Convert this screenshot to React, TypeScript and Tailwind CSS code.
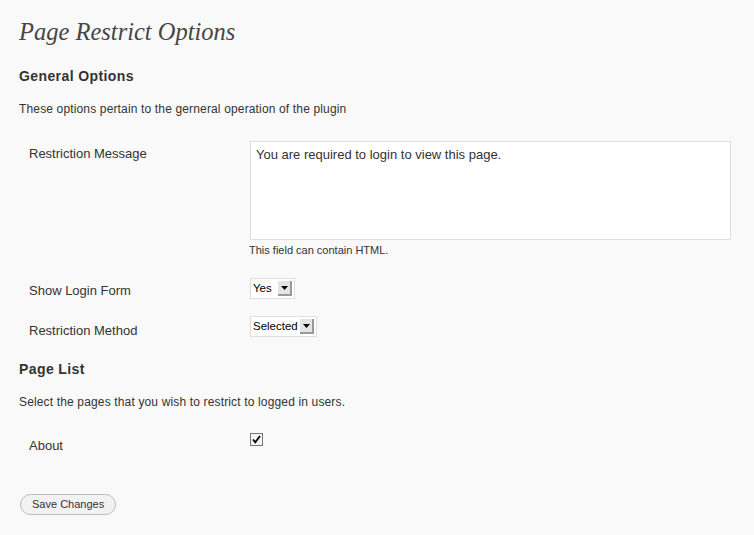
import { useState } from 'react';

const sans = { fontFamily: '"Liberation Sans", Arial, sans-serif' };

function FakeSelect({ value, width }: { value: string; width: string }) {
  return (
    <div
      className={`flex h-[21px] items-center justify-between border border-[#dfdfdf] bg-white pl-[2px] pr-[2px] ${width}`}
    >
      <span className="text-[11.5px] leading-none text-black">{value}</span>
      <span className="flex h-[15px] w-[14px] shrink-0 items-center justify-center border-r-2 border-b-2 border-r-[#999] border-b-[#999] bg-[#e4e4e4]">
        <svg width="7" height="4" viewBox="0 0 7 4">
          <path d="M0 0h7L3.5 4z" fill="#000" />
        </svg>
      </span>
    </div>
  );
}

export default function App() {
  const [msg, setMsg] = useState('You are required to login to view this page.');
  const [checked, setChecked] = useState(true);

  return (
    <div className="min-h-[535px] w-full bg-[#f9f9f9] text-[#333]" style={sans}>
      <div className="px-[19px] pt-[17px]">
        <h2
          className="text-[24.5px] italic leading-[29px] text-[#464646]"
          style={{ fontFamily: '"Liberation Serif", Georgia, serif' }}
        >
          Page Restrict Options
        </h2>

        <h3 className="mt-[21px] text-[14px] font-bold leading-[18px] tracking-[0.4px] text-[#333]">General Options</h3>
        <p className="mt-[16px] text-[12px] leading-[16px] tracking-[0.15px]">
          These options pertain to the gerneral operation of the plugin
        </p>

        {/* form table */}
        <div className="mt-[24px] grid grid-cols-[231px_1fr]">
          <div className="pl-[10px] pt-[5px] text-[13px] leading-[16px]">Restriction Message</div>
          <div>
            <textarea
              value={msg}
              onChange={(e) => setMsg(e.target.value)}
              className="block h-[99px] w-[481px] resize-none border border-[#dfdfdf] bg-white px-[5px] pt-[5px] text-[13px] leading-[16px] text-[#333] outline-none"
              style={sans}
            />
            <p className="mt-[3px] -ml-px text-[11px] leading-[14px] text-[#333]">This field can contain HTML.</p>
          </div>

          <div className="mt-[22px] pl-[10px] pt-[4px] text-[13px] leading-[16px]">Show Login Form</div>
          <div className="mt-[21px]">
            <FakeSelect value="Yes" width="w-[45px]" />
          </div>

          <div className="mt-[20px] pl-[10px] pt-[4px] text-[13px] leading-[16px]">Restriction Method</div>
          <div className="mt-[17px]">
            <FakeSelect value="Selected" width="w-[67px]" />
          </div>
        </div>

        <h3 className="mt-[21px] text-[14px] font-bold leading-[18px] tracking-[0.4px] text-[#333]">Page List</h3>
        <p className="mt-[16px] text-[12px] leading-[16px] tracking-[0.15px]">
          Select the pages that you wish to restrict to logged in users.
        </p>

        <div className="mt-[22px] grid grid-cols-[231px_1fr]">
          <div className="pl-[10px] pt-[6px] text-[13px] leading-[16px]">About</div>
          <div className="pt-px">
            <button
              type="button"
              onClick={() => setChecked(!checked)}
              className="flex h-[13px] w-[13px] items-center justify-center border border-[#777] bg-[#f4f4f4]"
            >
              {checked && (
                <svg width="9" height="9" viewBox="0 0 9 9">
                  <path d="M1 4.5l2.3 2.7L8 1" fill="none" stroke="#000" strokeWidth="1.8" />
                </svg>
              )}
            </button>
          </div>
        </div>

        <button
          type="button"
          className="mt-[40px] ml-px h-[21px] rounded-full border border-[#bbb] bg-[#f2f2f2] px-[11px] text-[11px] leading-[19px] text-[#333]"
          style={sans}
        >
          Save Changes
        </button>
      </div>
    </div>
  );
}
